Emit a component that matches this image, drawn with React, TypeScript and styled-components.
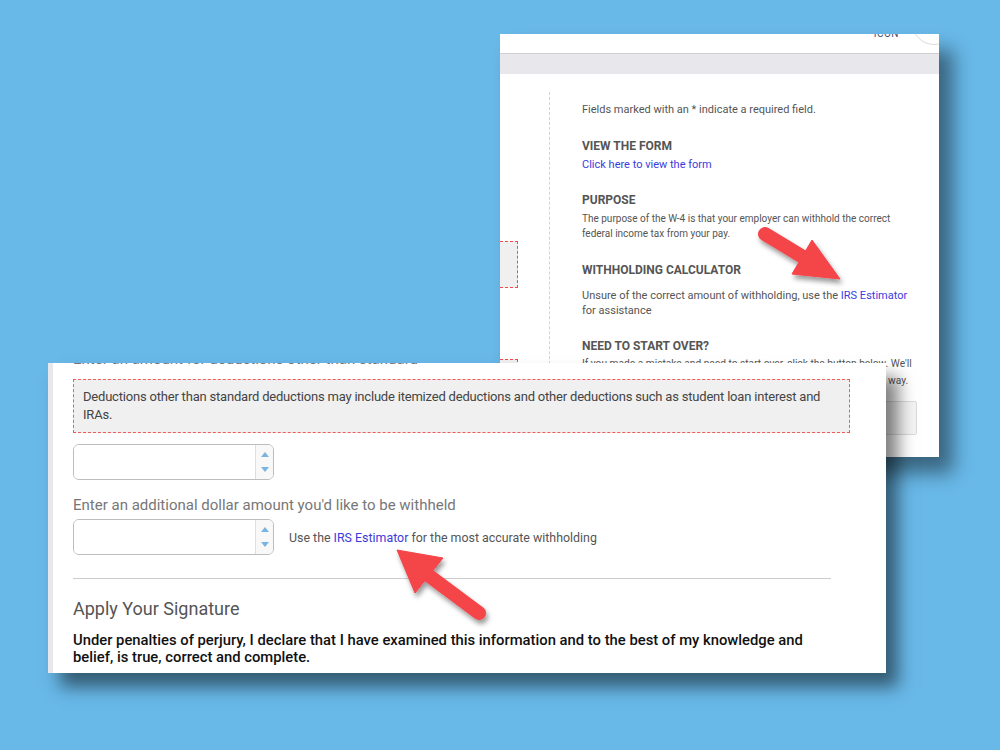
import styled, { createGlobalStyle } from 'styled-components'

const GlobalStyle = createGlobalStyle`
  html, body {
    margin: 0;
    padding: 0;
  }
  body {
    background: #68b8e8;
    font-family: Roboto, 'Liberation Sans', Arial, sans-serif;
  }
`

const Canvas = styled.div`
  position: relative;
  width: 1000px;
  height: 750px;
  overflow: hidden;
  background: #68b8e8;
`

// Back window (help sidebar)
const BackWindow = styled.section`
  position: absolute;
  left: 500px;
  top: 34px;
  width: 439px;
  height: 423px;
  background: #fff;
  overflow: hidden;
  box-shadow: 14px 16px 18px rgba(0, 0, 0, 0.45);
`

const TopBar = styled.header`
  height: 19px;
  display: flex;
  justify-content: flex-end;
  align-items: flex-start;
  border-bottom: 1px solid #cfcfd4;
`

const IconLabel = styled.span`
  margin-top: -5px;
  font-size: 10px;
  line-height: 10px;
  color: #4a4a6a;
  letter-spacing: 0.5px;
`

const Avatar = styled.span`
  width: 44px;
  height: 44px;
  margin: -33px -17px 0 13px;
  border-radius: 50%;
  border: 1px solid #dcdcdc;
  box-sizing: border-box;
`

const Band = styled.div`
  height: 20px;
  background: #e8e8ec;
`

const BackBody = styled.div`
  display: flex;
  align-items: stretch;
  height: 360px;
`

const GhostColumn = styled.div`
  width: 49px;
  margin-top: 18px;
  border-right: 1px dashed #d2d2d2;
  display: flex;
  flex-direction: column;
`

interface IGhostProps {
  $top: number
  $height: number
}
const GhostField = styled.div<IGhostProps>`
  width: 17px;
  height: ${({ $height }) => $height}px;
  margin-top: ${({ $top }) => $top}px;
  background: #f0f0f0;
  border: 1px dashed #ee4d4d;
  border-left: none;
`

const HelpColumn = styled.div`
  width: 335px;
  padding: 28px 0 0 32px;
  color: #555;
`

const Intro = styled.p`
  margin: 0;
  font-size: 11px;
  line-height: 15px;
`

const HelpSection = styled.div`
  margin-top: 20.5px;
`

interface ITitleProps {
  $gap?: number
}
const HelpTitle = styled.h3<ITitleProps>`
  margin: 0 0 ${({ $gap }) => $gap ?? 3}px;
  font-size: 12px;
  line-height: 16px;
  font-weight: 700;
  color: #555;
`

interface IHelpTextProps {
  $size?: number
  $lh?: number
}
const HelpText = styled.p<IHelpTextProps>`
  margin: 0;
  font-size: ${({ $size }) => $size ?? 11}px;
  line-height: ${({ $lh }) => $lh ?? 15}px;
  color: #555;
`

const Link = styled.a`
  color: #3b3bdc;
  text-decoration: none;
`

const ResetButton = styled.button`
  display: block;
  width: 335px;
  height: 34px;
  margin-top: 12px;
  background: #f4f4f4;
  border: 1px solid #dadada;
  border-radius: 2px;
`

// Front window (form)
const FrontWindow = styled.section`
  position: absolute;
  left: 48px;
  top: 363px;
  width: 838px;
  height: 310px;
  box-sizing: border-box;
  background: #fff;
  border-left: 5px solid #e8e8ec;
  overflow: hidden;
  box-shadow: 12px 14px 16px rgba(0, 0, 0, 0.5);
`

const FormBody = styled.div`
  margin-top: -14px;
  padding-left: 20px;
  display: flex;
  flex-direction: column;
  align-items: flex-start;
`

interface ILabelProps {
  $mt?: number
}
const FieldLabel = styled.label<ILabelProps>`
  margin-top: ${({ $mt }) => $mt ?? 0}px;
  font-size: 15px;
  line-height: 20px;
  color: #777;
`

const Note = styled.div`
  width: 777px;
  box-sizing: border-box;
  margin-top: 10px;
  padding: 8px 9px;
  background: #f0f0f0;
  border: 1px dashed #f05a5a;
  font-size: 13px;
  line-height: 18px;
  letter-spacing: -0.2px;
  color: #444;
`

interface INumberProps {
  $mt?: number
}
const NumberBox = styled.div<INumberProps>`
  display: flex;
  width: 201px;
  height: 36px;
  margin-top: ${({ $mt }) => $mt ?? 0}px;
  box-sizing: border-box;
  border: 1px solid #bdbdbd;
  border-radius: 6px;
  overflow: hidden;
`

const NumberInput = styled.input`
  flex: 1;
  min-width: 0;
  border: none;
  outline: none;
  padding: 0 8px;
  font-size: 14px;
  font-family: inherit;
`

const Spinner = styled.div`
  width: 17px;
  border-left: 1px solid #dedede;
  background: #f8f8f8;
  display: flex;
  flex-direction: column;
  justify-content: space-between;
  align-items: center;
  padding: 7px 0;
`

interface IArrowProps {
  $down?: boolean
}
const SpinArrow = styled.span<IArrowProps>`
  width: 0;
  height: 0;
  border-left: 4px solid transparent;
  border-right: 4px solid transparent;
  ${({ $down }) =>
    $down ? 'border-top: 5px solid #7ab4e2;' : 'border-bottom: 5px solid #7ab4e2;'}
`

const InputRow = styled.div`
  display: flex;
  align-items: center;
  gap: 15px;
  margin-top: 4px;
`

const Hint = styled.span`
  font-size: 12.4px;
  color: #555;
`

const Divider = styled.hr`
  width: 758px;
  margin: 23px 0 0;
  border: none;
  border-top: 1px solid #cccccc;
`

const SignatureTitle = styled.h2`
  margin: 18px 0 0;
  font-size: 18px;
  line-height: 24px;
  font-weight: 400;
  color: #555;
`

const Declaration = styled.p`
  width: 740px;
  margin: 11px 0 0;
  font-size: 14.8px;
  line-height: 17px;
  font-weight: 500;
  color: #111;
`

const Overlay = styled.svg`
  position: absolute;
  left: 0;
  top: 0;
  pointer-events: none;
`

const NumberField = ({ mt }: { mt?: number }) => (
  <NumberBox $mt={mt}>
    <NumberInput type='text' aria-label='amount' />
    <Spinner>
      <SpinArrow />
      <SpinArrow $down />
    </Spinner>
  </NumberBox>
)

const Arrows = () => (
  <Overlay width='1000' height='750' viewBox='0 0 1000 750'>
    <defs>
      <filter id='arrowShadow' x='-30%' y='-30%' width='160%' height='160%'>
        <feDropShadow dx='2' dy='4' stdDeviation='2.5' floodColor='#000' floodOpacity='0.4' />
      </filter>
    </defs>
    <g fill='#f44449' stroke='#f44449' filter='url(#arrowShadow)'>
      <line x1='765' y1='234' x2='803' y2='257' strokeWidth='14' strokeLinecap='round' />
      <polygon points='812,240 792,274 840,279' strokeWidth='1' strokeLinejoin='round' />
      <line x1='479' y1='613' x2='428' y2='575' strokeWidth='14' strokeLinecap='round' />
      <polygon points='397,550 443,558 415,593' strokeWidth='1' strokeLinejoin='round' />
    </g>
  </Overlay>
)

export default function App() {
  return (
    <>
      <GlobalStyle />
      <Canvas>
        <BackWindow>
          <TopBar>
            <IconLabel>ICON</IconLabel>
            <Avatar />
          </TopBar>
          <Band />
          <BackBody>
            <GhostColumn>
              <GhostField $top={149} $height={45} />
              <GhostField $top={71} $height={40} />
            </GhostColumn>
            <HelpColumn>
              <Intro>Fields marked with an * indicate a required field.</Intro>
              <HelpSection>
                <HelpTitle>VIEW THE FORM</HelpTitle>
                <HelpText>
                  <Link href='#'>Click here to view the form</Link>
                </HelpText>
              </HelpSection>
              <HelpSection>
                <HelpTitle>PURPOSE</HelpTitle>
                <HelpText $size={10}>
                  The purpose of the W-4 is that your employer can withhold the correct
                  federal income tax from your pay.
                </HelpText>
              </HelpSection>
              <HelpSection>
                <HelpTitle $gap={10}>WITHHOLDING CALCULATOR</HelpTitle>
                <HelpText>
                  Unsure of the correct amount of withholding, use the{' '}
                  <Link href='#'>IRS Estimator</Link> for assistance
                </HelpText>
              </HelpSection>
              <HelpSection>
                <HelpTitle $gap={1}>NEED TO START OVER?</HelpTitle>
                <HelpText $size={10.2} $lh={17}>
                  If you made a mistake and need to start over, click the button below. We'll
                  clear all of the details you have entered so far and send you on your way.
                </HelpText>
                <ResetButton type='button' aria-label='Start over' />
              </HelpSection>
            </HelpColumn>
          </BackBody>
        </BackWindow>

        <FrontWindow>
          <FormBody>
            <FieldLabel>Enter an amount for deductions other than standard</FieldLabel>
            <Note>
              Deductions other than standard deductions may include itemized deductions and
              other deductions such as student loan interest and IRAs.
            </Note>
            <NumberField mt={11} />
            <FieldLabel $mt={15}>
              Enter an additional dollar amount you'd like to be withheld
            </FieldLabel>
            <InputRow>
              <NumberField />
              <Hint>
                Use the <Link href='#'>IRS Estimator</Link> for the most accurate withholding
              </Hint>
            </InputRow>
            <Divider />
            <SignatureTitle>Apply Your Signature</SignatureTitle>
            <Declaration>
              Under penalties of perjury, I declare that I have examined this information and to
              the best of my knowledge and belief, is true, correct and complete.
            </Declaration>
          </FormBody>
        </FrontWindow>

        <Arrows />
      </Canvas>
    </>
  )
}
